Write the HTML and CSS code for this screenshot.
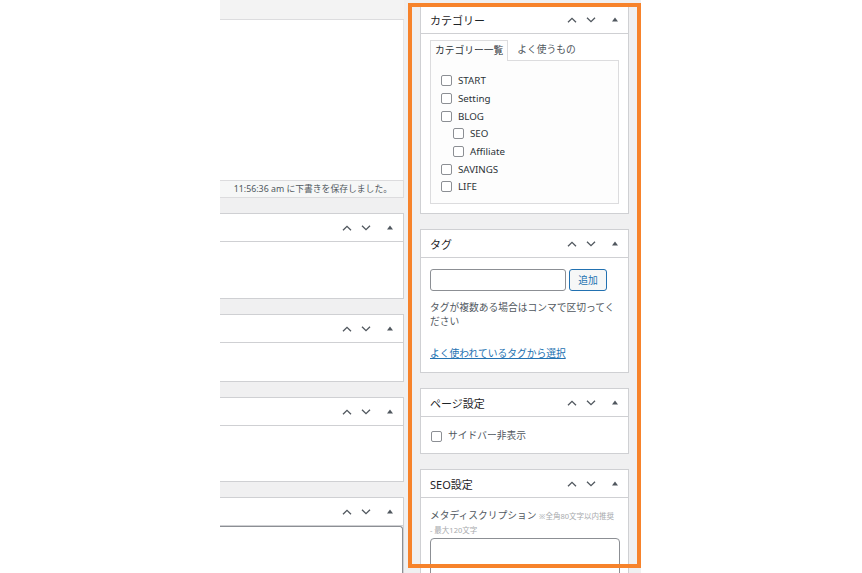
FILE: index.html
```html
<!DOCTYPE html>
<html lang="ja">
<head>
<meta charset="utf-8">
<title>投稿編集</title>
<link rel="stylesheet" href="styles.css">
</head>
<body>
<div class="stage">
  <div class="shot">
    <div class="main-col">
      <div class="editor">
        <div class="toolbar"></div>
        <div class="editor-area"></div>
        <div class="status">11:56:36 am に下書きを保存しました。</div>
      </div>

      <div class="postbox lp1">
        <div class="pb-head">
          <h2></h2>
          <div class="ctrls">
            <span class="ctrl up"><svg width="10" height="6" viewBox="0 0 10 6"><path d="M1 5.3L5 1.3L9 5.3" fill="none" stroke="#50575e" stroke-width="1.3"/></svg></span>
            <span class="ctrl down"><svg width="10" height="6" viewBox="0 0 10 6"><path d="M1 0.7L5 4.7L9 0.7" fill="none" stroke="#50575e" stroke-width="1.3"/></svg></span>
            <span class="ctrl tog"><svg width="6" height="5" viewBox="0 0 6 5"><path d="M0 4.5L3 0.5L6 4.5Z" fill="#50575e"/></svg></span>
          </div>
        </div>
      </div>

      <div class="postbox lp2">
        <div class="pb-head">
          <h2></h2>
          <div class="ctrls">
            <span class="ctrl up"><svg width="10" height="6" viewBox="0 0 10 6"><path d="M1 5.3L5 1.3L9 5.3" fill="none" stroke="#50575e" stroke-width="1.3"/></svg></span>
            <span class="ctrl down"><svg width="10" height="6" viewBox="0 0 10 6"><path d="M1 0.7L5 4.7L9 0.7" fill="none" stroke="#50575e" stroke-width="1.3"/></svg></span>
            <span class="ctrl tog"><svg width="6" height="5" viewBox="0 0 6 5"><path d="M0 4.5L3 0.5L6 4.5Z" fill="#50575e"/></svg></span>
          </div>
        </div>
      </div>

      <div class="postbox lp3">
        <div class="pb-head">
          <h2></h2>
          <div class="ctrls">
            <span class="ctrl up"><svg width="10" height="6" viewBox="0 0 10 6"><path d="M1 5.3L5 1.3L9 5.3" fill="none" stroke="#50575e" stroke-width="1.3"/></svg></span>
            <span class="ctrl down"><svg width="10" height="6" viewBox="0 0 10 6"><path d="M1 0.7L5 4.7L9 0.7" fill="none" stroke="#50575e" stroke-width="1.3"/></svg></span>
            <span class="ctrl tog"><svg width="6" height="5" viewBox="0 0 6 5"><path d="M0 4.5L3 0.5L6 4.5Z" fill="#50575e"/></svg></span>
          </div>
        </div>
      </div>

      <div class="postbox lp4">
        <div class="pb-head">
          <h2></h2>
          <div class="ctrls">
            <span class="ctrl up"><svg width="10" height="6" viewBox="0 0 10 6"><path d="M1 5.3L5 1.3L9 5.3" fill="none" stroke="#50575e" stroke-width="1.3"/></svg></span>
            <span class="ctrl down"><svg width="10" height="6" viewBox="0 0 10 6"><path d="M1 0.7L5 4.7L9 0.7" fill="none" stroke="#50575e" stroke-width="1.3"/></svg></span>
            <span class="ctrl tog"><svg width="6" height="5" viewBox="0 0 6 5"><path d="M0 4.5L3 0.5L6 4.5Z" fill="#50575e"/></svg></span>
          </div>
        </div>
        <div class="lp4-box"></div>
      </div>
    </div>

    <div class="side-col">
      <div class="postbox cat-box">
        <div class="pb-head">
          <h2>カテゴリー</h2>
          <div class="ctrls">
            <span class="ctrl up"><svg width="10" height="6" viewBox="0 0 10 6"><path d="M1 5.3L5 1.3L9 5.3" fill="none" stroke="#50575e" stroke-width="1.3"/></svg></span>
            <span class="ctrl down"><svg width="10" height="6" viewBox="0 0 10 6"><path d="M1 0.7L5 4.7L9 0.7" fill="none" stroke="#50575e" stroke-width="1.3"/></svg></span>
            <span class="ctrl tog"><svg width="6" height="5" viewBox="0 0 6 5"><path d="M0 4.5L3 0.5L6 4.5Z" fill="#50575e"/></svg></span>
          </div>
        </div>
        <div class="cat-body">
          <div class="tabs">
            <span class="tab active">カテゴリー一覧</span>
            <span class="tab">よく使うもの</span>
          </div>
          <div class="tab-panel">
            <ul class="cat-list">
              <li><label><input type="checkbox" class="cb">START</label></li>
              <li><label><input type="checkbox" class="cb">Setting</label></li>
              <li><label><input type="checkbox" class="cb">BLOG</label>
                <ul>
                  <li><label><input type="checkbox" class="cb">SEO</label></li>
                  <li><label><input type="checkbox" class="cb">Affiliate</label></li>
                </ul>
              </li>
              <li><label><input type="checkbox" class="cb">SAVINGS</label></li>
              <li><label><input type="checkbox" class="cb">LIFE</label></li>
            </ul>
          </div>
        </div>
      </div>

      <div class="postbox tag-box">
        <div class="pb-head">
          <h2>タグ</h2>
          <div class="ctrls">
            <span class="ctrl up"><svg width="10" height="6" viewBox="0 0 10 6"><path d="M1 5.3L5 1.3L9 5.3" fill="none" stroke="#50575e" stroke-width="1.3"/></svg></span>
            <span class="ctrl down"><svg width="10" height="6" viewBox="0 0 10 6"><path d="M1 0.7L5 4.7L9 0.7" fill="none" stroke="#50575e" stroke-width="1.3"/></svg></span>
            <span class="ctrl tog"><svg width="6" height="5" viewBox="0 0 6 5"><path d="M0 4.5L3 0.5L6 4.5Z" fill="#50575e"/></svg></span>
          </div>
        </div>
        <div class="tag-body">
          <div class="tag-row">
            <input type="text" class="tag-input">
            <button type="button" class="tag-btn">追加</button>
          </div>
          <p class="tag-desc">タグが複数ある場合はコンマで区切ってください</p>
          <a class="tag-link" href="#">よく使われているタグから選択</a>
        </div>
      </div>

      <div class="postbox page-box">
        <div class="pb-head">
          <h2>ページ設定</h2>
          <div class="ctrls">
            <span class="ctrl up"><svg width="10" height="6" viewBox="0 0 10 6"><path d="M1 5.3L5 1.3L9 5.3" fill="none" stroke="#50575e" stroke-width="1.3"/></svg></span>
            <span class="ctrl down"><svg width="10" height="6" viewBox="0 0 10 6"><path d="M1 0.7L5 4.7L9 0.7" fill="none" stroke="#50575e" stroke-width="1.3"/></svg></span>
            <span class="ctrl tog"><svg width="6" height="5" viewBox="0 0 6 5"><path d="M0 4.5L3 0.5L6 4.5Z" fill="#50575e"/></svg></span>
          </div>
        </div>
        <div class="page-body">
          <label class="check-row"><input type="checkbox" class="cb">サイドバー非表示</label>
        </div>
      </div>

      <div class="postbox seo-box">
        <div class="pb-head">
          <h2>SEO設定</h2>
          <div class="ctrls">
            <span class="ctrl up"><svg width="10" height="6" viewBox="0 0 10 6"><path d="M1 5.3L5 1.3L9 5.3" fill="none" stroke="#50575e" stroke-width="1.3"/></svg></span>
            <span class="ctrl down"><svg width="10" height="6" viewBox="0 0 10 6"><path d="M1 0.7L5 4.7L9 0.7" fill="none" stroke="#50575e" stroke-width="1.3"/></svg></span>
            <span class="ctrl tog"><svg width="6" height="5" viewBox="0 0 6 5"><path d="M0 4.5L3 0.5L6 4.5Z" fill="#50575e"/></svg></span>
          </div>
        </div>
        <div class="seo-body">
          <label class="seo-label">メタディスクリプション <span class="seo-note">※全角80文字以内推奨<br>- 最大120文字</span></label>
          <textarea class="seo-text"></textarea>
        </div>
      </div>
    </div>
  </div>
  <div class="highlight"></div>
</div>
</body>
</html>
```

FILE: styles.css
```css
* {
  box-sizing: border-box;
}

html,
body {
  margin: 0;
  padding: 0;
  background: #fff;
}

body {
  font-family: "Noto Sans", "Noto Sans CJK JP", sans-serif;
  font-size: 9.75px;
  color: #2c3338;
}

.stage {
  position: relative;
  width: 862px;
  height: 573px;
  overflow: hidden;
}

.shot {
  margin-left: 220px;
  width: 421px;
  height: 573px;
  background: #f0f0f1;
  display: flex;
  gap: 16px;
  overflow: hidden;
}

.main-col {
  width: 184px;
  flex: none;
  display: flex;
  flex-direction: column;
  gap: 15px;
}

.side-col {
  width: 209px;
  flex: none;
  display: flex;
  flex-direction: column;
  gap: 15px;
  padding-top: 5px;
}

.highlight {
  position: absolute;
  left: 408px;
  top: 3px;
  width: 233px;
  height: 565px;
  border: 4px solid #f7832b;
}

/* editor */
.editor {
  flex: none;
  display: flex;
  flex-direction: column;
}

.toolbar {
  height: 20px;
  background: #f3f3f3;
  border-bottom: 1px solid #dcdcde;
}

.editor-area {
  height: 160px;
  background: #fff;
  border-right: 1px solid #e6e6e8;
}

.status {
  height: 18px;
  background: #f6f7f7;
  border: 1px solid #dcdcde;
  border-left: 0;
  text-align: right;
  padding-right: 11px;
  font-size: 8.8px;
  line-height: 16px;
  color: #50575e;
  white-space: nowrap;
}

/* postbox */
.postbox {
  flex: none;
  background: #fff;
  border: 1px solid #cfd0d3;
  display: flex;
  flex-direction: column;
}

.main-col .postbox {
  border-left: 0;
}

.lp1 { height: 86px; }
.lp2 { height: 68px; }
.lp3 { height: 85px; }
.lp4 { height: 90px; }

.cat-box { height: 209px; }
.tag-box { height: 144px; }
.page-box { height: 66px; }
.seo-box { height: 120px; }

.pb-head {
  flex: none;
  height: 28px;
  border-bottom: 1px solid #cfd0d3;
  display: flex;
  align-items: center;
  justify-content: space-between;
  padding-left: 9px;
}

.pb-head h2 {
  margin: 0;
  font-family: "Noto Sans", "Noto Sans CJK JP", sans-serif;
  font-size: 11px;
  font-weight: 400;
  color: #1d2327;
}

.ctrls {
  display: flex;
  height: 100%;
}

.ctrl {
  display: flex;
  align-items: center;
  justify-content: center;
}

.ctrl svg {
  display: block;
}

.ctrl.up { width: 16px; }
.ctrl.down { width: 22px; }
.ctrl.tog { width: 26px; }

.lp4-box {
  flex: 1;
  border: 1px solid #8c8f94;
  border-left: 0;
  border-top-right-radius: 3px;
  border-bottom: 0;
}

/* checkbox */
.cb {
  -webkit-appearance: none;
  appearance: none;
  flex: none;
  width: 11px;
  height: 11px;
  margin: 0 6px 0 0;
  border: 1px solid #8c8f94;
  border-radius: 2px;
  background: #fff;
}

/* category */
.cat-body {
  padding: 6px 9px 0;
}

.tabs {
  display: flex;
  align-items: flex-end;
  height: 20px;
  position: relative;
  z-index: 1;
}

.tab {
  height: 20px;
  padding: 0 4px;
  line-height: 19px;
  color: #50575e;
  white-space: nowrap;
}

.tab + .tab {
  margin-left: 5px;
}

.tab.active {
  height: 21px;
  margin-bottom: -1px;
  border: 1px solid #dcdcde;
  border-bottom: 0;
  background: #fdfdfd;
  color: #2c3338;
}

.tab-panel {
  height: 144px;
  border: 1px solid #dcdcde;
  background: #fdfdfd;
}

.cat-list,
.cat-list ul {
  list-style: none;
  margin: 0;
}

.cat-list {
  padding: 11px 0 0 10px;
}

.cat-list ul {
  padding-left: 12px;
}

.cat-list label {
  display: flex;
  align-items: center;
  height: 17.67px;
  color: #2c3338;
}

/* tag */
.tag-body {
  padding: 11px 9px 0;
}

.tag-row {
  display: flex;
  gap: 3px;
}

.tag-input {
  width: 136px;
  height: 22px;
  margin: 0;
  border: 1px solid #8c8f94;
  border-radius: 3px;
  background: #fff;
}

.tag-btn {
  width: 38px;
  height: 22px;
  margin: 0;
  padding: 0;
  border: 1px solid #2271b1;
  border-radius: 3px;
  background: #f6f7f7;
  color: #2271b1;
  font-family: "Noto Sans", "Noto Sans CJK JP", sans-serif;
  font-size: 9.75px;
}

.tag-desc {
  margin: 10px 0 0;
  line-height: 14px;
  color: #50575e;
}

.tag-link {
  display: block;
  margin-top: 18px;
  line-height: 14px;
  color: #2271b1;
  text-decoration: underline;
}

/* page settings */
.page-body {
  padding: 12px 10px 0;
}

.check-row {
  display: flex;
  align-items: center;
  line-height: 14px;
  color: #50575e;
}

/* seo */
.seo-body {
  padding: 11px 9px 0;
}

.seo-label {
  display: block;
  line-height: 14px;
  color: #50575e;
}

.seo-note {
  font-size: 7.5px;
  line-height: 12px;
  color: #a7aaad;
}

.seo-text {
  display: block;
  width: 190px;
  height: 60px;
  margin: 1px 0 0;
  border: 1px solid #8c8f94;
  border-radius: 4px;
  background: #fff;
  resize: none;
}
```
